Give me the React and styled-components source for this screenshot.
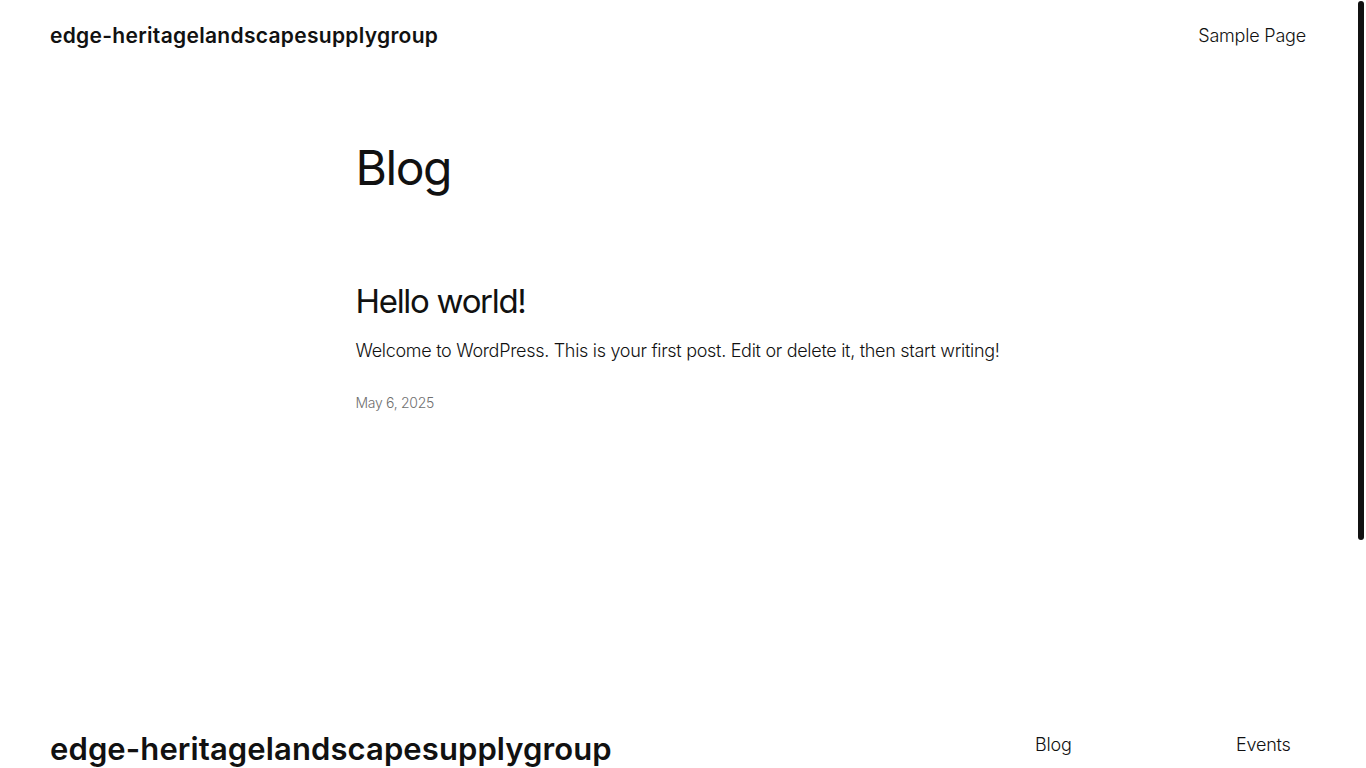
import styled, { createGlobalStyle } from "styled-components";

const GlobalStyle = createGlobalStyle`
  html, body {
    margin: 0;
    padding: 0;
    background: #ffffff;
    overflow: hidden;
  }

  body {
    font-family: Inter, "Noto Sans", sans-serif;
    color: #111111;
    -webkit-font-smoothing: antialiased;
  }

  a {
    color: inherit;
    text-decoration: none;
  }
`;

const footerLinks = [
  ["Blog", "About", "FAQs", "Authors"],
  ["Events", "Shop", "Patterns", "Themes"],
];

function App() {
  return (
    <>
      <GlobalStyle />
      <StViewport>
        <StPage>
          <StHeader>
            <StSiteTitle href="#">edge-heritagelandscapesupplygroup</StSiteTitle>
            <StNav>
              <StNavLink href="#">Sample Page</StNavLink>
            </StNav>
          </StHeader>

          <StMain>
            <StPageTitle>Blog</StPageTitle>
            <StPost>
              <StPostTitle>
                <a href="#">Hello world!</a>
              </StPostTitle>
              <StExcerpt>
                Welcome to WordPress. This is your first post. Edit or delete
                it, then start writing!
              </StExcerpt>
              <StDate>May 6, 2025</StDate>
            </StPost>
          </StMain>

          <StFooter>
            <StFooterTitle href="#">edge-heritagelandscapesupplygroup</StFooterTitle>
            <StFooterNav>
              {footerLinks.map((col, idx) => (
                <StFooterCol key={idx}>
                  {col.map((label) => (
                    <StFooterLink key={label} href="#">
                      {label}
                    </StFooterLink>
                  ))}
                </StFooterCol>
              ))}
            </StFooterNav>
          </StFooter>
        </StPage>
        <StScrollThumb aria-hidden="true" />
      </StViewport>
    </>
  );
}

export default App;

const StViewport = styled.div`
  position: relative;
  height: 100vh;
  overflow: hidden;
  padding-right: 10px;
`;

const StScrollThumb = styled.div`
  position: fixed;
  top: 1px;
  right: 2px;

  width: 6px;
  height: 539px;

  border-radius: 3px;
  background: #111111;
`;

const StPage = styled.div`
  display: flex;
  flex-direction: column;
  min-height: 1095px;
`;

const StHeader = styled.header`
  display: flex;
  justify-content: space-between;
  align-items: center;

  padding: 22px 50px 20px;
`;

const StSiteTitle = styled.a`
  font-weight: 600;
  font-size: 21px;
  line-height: 28px;
  letter-spacing: 0.3px;
`;

const StNav = styled.nav`
  display: flex;
  gap: 24px;
`;

const StNavLink = styled.a`
  font-weight: 300;
  font-size: 18px;
  line-height: 28px;
  letter-spacing: -0.2px;
`;

const StMain = styled.main`
  width: 645px;
  margin: 0 auto;
  padding: 69px 0 0;
`;

const StPageTitle = styled.h1`
  margin: 0 0 85px;

  font-weight: 400;
  font-size: 48px;
  line-height: 1.2;
  letter-spacing: -1.4px;
`;

const StPost = styled.article`
  display: flex;
  flex-direction: column;
`;

const StPostTitle = styled.h2`
  margin: 0 0 17px;

  font-weight: 400;
  font-size: 33px;
  line-height: 1.2;
  letter-spacing: -1.3px;
`;

const StExcerpt = styled.p`
  margin: 0 0 30px;

  font-weight: 300;
  font-size: 18px;
  line-height: 1.4;
  letter-spacing: -0.3px;
`;

const StDate = styled.time`
  font-weight: 300;
  font-size: 14px;
  line-height: 1.4;
  letter-spacing: -0.3px;
  color: #6f6f6f;
`;

const StFooter = styled.footer`
  display: flex;
  justify-content: space-between;
  align-items: flex-start;

  margin-top: 317px;
  padding: 0 50px 60px;
`;

const StFooterTitle = styled.a`
  font-weight: 600;
  font-size: 31px;
  line-height: 1.2;
  letter-spacing: 0.1px;
`;

const StFooterNav = styled.nav`
  display: flex;
  gap: 165px;
  padding-top: 3px;
  margin-right: 34px;
`;

const StFooterCol = styled.div`
  display: flex;
  flex-direction: column;
  gap: 12px;
  width: 36px;
`;

const StFooterLink = styled.a`
  font-weight: 300;
  font-size: 18px;
  line-height: 1.3;
  letter-spacing: -0.2px;
  white-space: nowrap;
`;
